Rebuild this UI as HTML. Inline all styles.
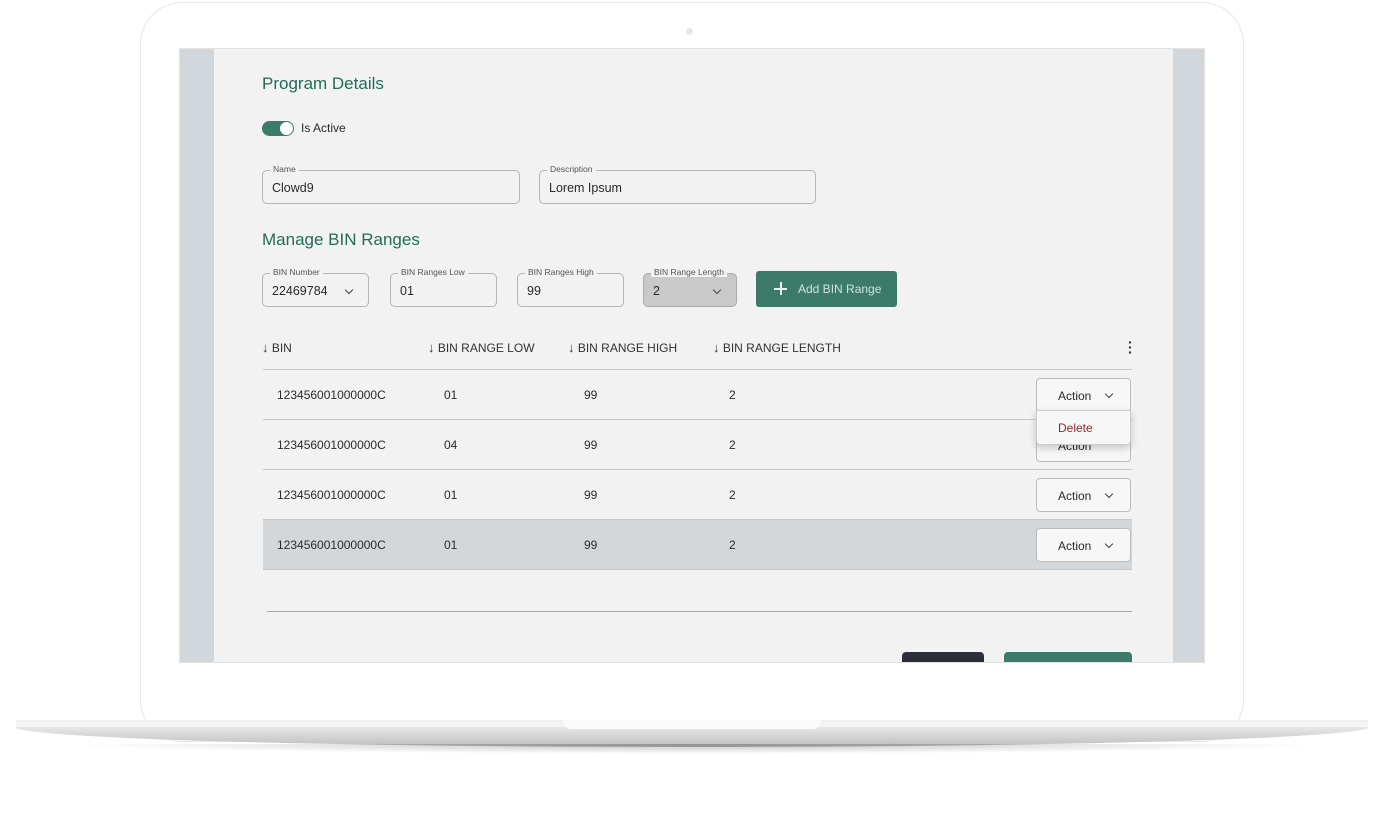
<!DOCTYPE html>
<html><head><style>
*{box-sizing:border-box;margin:0;padding:0}
body{width:1389px;height:818px;background:#fff;position:relative;overflow:hidden;font-family:"Liberation Sans",sans-serif;color:#2a2a2a}
.a{position:absolute}
.lid{left:140px;top:2px;width:1104px;height:740px;border:1.5px solid #e6e6e6;border-radius:42px;background:#fff}
.screen{left:179px;top:48px;width:1026px;height:615px;background:#f2f2f2;border:1px solid #e2e2e2;overflow:hidden}
.sideL{left:0;top:0;width:34px;height:615px;background:#d1d6da}
.sideR{right:0;top:0;width:31px;height:615px;background:#d1d6da}
h2{position:absolute;color:#236b57;font-size:17px;font-weight:normal}
.fld{position:absolute;border:1px solid #b5b5b5;border-radius:5px;height:34px;font-size:12.5px;padding:10px 0 0 9px}
.fld .l{position:absolute;top:-7px;left:7px;background:#f2f2f2;padding:0 3px;font-size:8.5px;color:#555}
.chev{position:absolute;width:6px;height:6px;border-right:1.3px solid #444;border-bottom:1.3px solid #444;transform:rotate(45deg)}
.th{position:absolute;top:341px;font-size:12px;color:#333}
.th b{font-size:13px}
.row{position:absolute;left:83px;width:869px;height:50px;border-bottom:1px solid #c8c8c8;font-size:12px}
.row span{position:absolute;top:18px}
.act{position:absolute;right:1px;top:8px;width:95px;height:34px;border:1px solid #bcbcbc;border-radius:4px;background:#f7f7f7;font-size:12px;padding:10px 0 0 21px}
</style></head><body>
<div class="a lid"></div>
<div class="a" style="left:686px;top:28px;width:7px;height:7px;border-radius:50%;background:#e6e6e6"></div>
<div class="a screen">
 <div class="a sideL"></div><div class="a sideR"></div>
 <h2 style="left:82px;top:25px">Program Details</h2>
 <div class="a" style="left:82px;top:72px;width:32px;height:15px;border-radius:8px;background:#3c7a6a"></div>
 <div class="a" style="left:100px;top:73px;width:13px;height:13px;border-radius:50%;background:#fff"></div>
 <div class="a" style="left:121px;top:72px;font-size:12px">Is Active</div>
 <div class="fld" style="left:82px;top:121px;width:258px"><span class="l">Name</span>Clowd9</div>
 <div class="fld" style="left:359px;top:121px;width:277px"><span class="l">Description</span>Lorem Ipsum</div>
 <h2 style="left:82px;top:181px">Manage BIN Ranges</h2>
 <div class="fld" style="left:82px;top:224px;width:107px"><span class="l">BIN Number</span>22469784<i class="chev" style="left:83px;top:13px"></i></div>
 <div class="fld" style="left:210px;top:224px;width:107px"><span class="l">BIN Ranges Low</span>01</div>
 <div class="fld" style="left:337px;top:224px;width:107px"><span class="l">BIN Ranges High</span>99</div>
 <div class="fld" style="left:463px;top:224px;width:94px;background:#c9c9c9;border-color:#aaa"><span class="l" style="background:#f2f2f2">BIN Range Length</span>2<i class="chev" style="left:70px;top:13px"></i></div>
 <div class="a" style="left:576px;top:222px;width:141px;height:36px;background:#3c7a6a;border-radius:3px;color:#cfe3dc;font-size:12px;padding:11px 0 0 42px">Add BIN Range</div>
 <div class="a" style="left:594px;top:239px;width:13px;height:1.5px;background:#e6f0ec"></div>
 <div class="a" style="left:600px;top:233px;width:1.5px;height:13px;background:#e6f0ec"></div>
 <div class="th" style="left:82px;top:291px"><b>↓</b> BIN</div>
 <div class="th" style="left:248px;top:291px"><b>↓</b> BIN RANGE LOW</div>
 <div class="th" style="left:388px;top:291px"><b>↓</b> BIN RANGE HIGH</div>
 <div class="th" style="left:533px;top:291px"><b>↓</b> BIN RANGE LENGTH</div>
 <div class="a" style="left:948px;top:291px;font-size:14px;font-weight:bold;line-height:5px">·<br>·<br>·</div>
 <div class="a" style="left:83px;top:320px;width:869px;height:1px;background:#c8c8c8"></div>
 <div class="row" style="top:321px"><span style="left:14px">123456001000000C</span><span style="left:181px">01</span><span style="left:321px">99</span><span style="left:466px">2</span><div class="act">Action<i class="chev" style="left:69px;top:12px"></i></div></div>
 <div class="row" style="top:371px"><span style="left:14px">123456001000000C</span><span style="left:181px">04</span><span style="left:321px">99</span><span style="left:466px">2</span><div class="act">Action</div></div>
 <div class="row" style="top:421px"><span style="left:14px">123456001000000C</span><span style="left:181px">01</span><span style="left:321px">99</span><span style="left:466px">2</span><div class="act">Action<i class="chev" style="left:69px;top:12px"></i></div></div>
 <div class="row" style="top:471px;background:#d3d7da"><span style="left:14px">123456001000000C</span><span style="left:181px">01</span><span style="left:321px">99</span><span style="left:466px">2</span><div class="act">Action<i class="chev" style="left:69px;top:12px"></i></div></div>
 <div class="a" style="left:856px;top:361px;width:95px;height:35px;background:#f7f7f7;border:1px solid #ccc;border-radius:0 0 4px 4px;box-shadow:0 3px 8px rgba(0,0,0,.2);color:#8b2a2e;font-size:12px;padding:10px 0 0 21px">Delete</div>
 <div class="a" style="left:87px;top:562px;width:865px;height:1px;background:#a8a8a8"></div>
 <div class="a" style="left:722px;top:603px;width:82px;height:20px;background:#2c2f3a;border-radius:4px"></div>
 <div class="a" style="left:824px;top:603px;width:128px;height:20px;background:#3c7a6a;border-radius:4px"></div>
</div>
<div class="a" style="left:16px;top:720px;width:1352px;height:10px;background:linear-gradient(#f0f0f0,#f8f8f8);"></div>
<div class="a" style="left:16px;top:727px;width:1352px;height:20px;background:linear-gradient(#e8e8e8,#bdbdbd);border-radius:0 0 50% 50%/0 0 100% 100%"></div>
<div class="a" style="left:60px;top:744px;width:1270px;height:10px;background:radial-gradient(ellipse at top,rgba(0,0,0,.25),rgba(0,0,0,0) 70%)"></div>
<div class="a" style="left:563px;top:720px;width:258px;height:9px;background:#fafafa;border-radius:0 0 8px 8px"></div>
</body></html>
